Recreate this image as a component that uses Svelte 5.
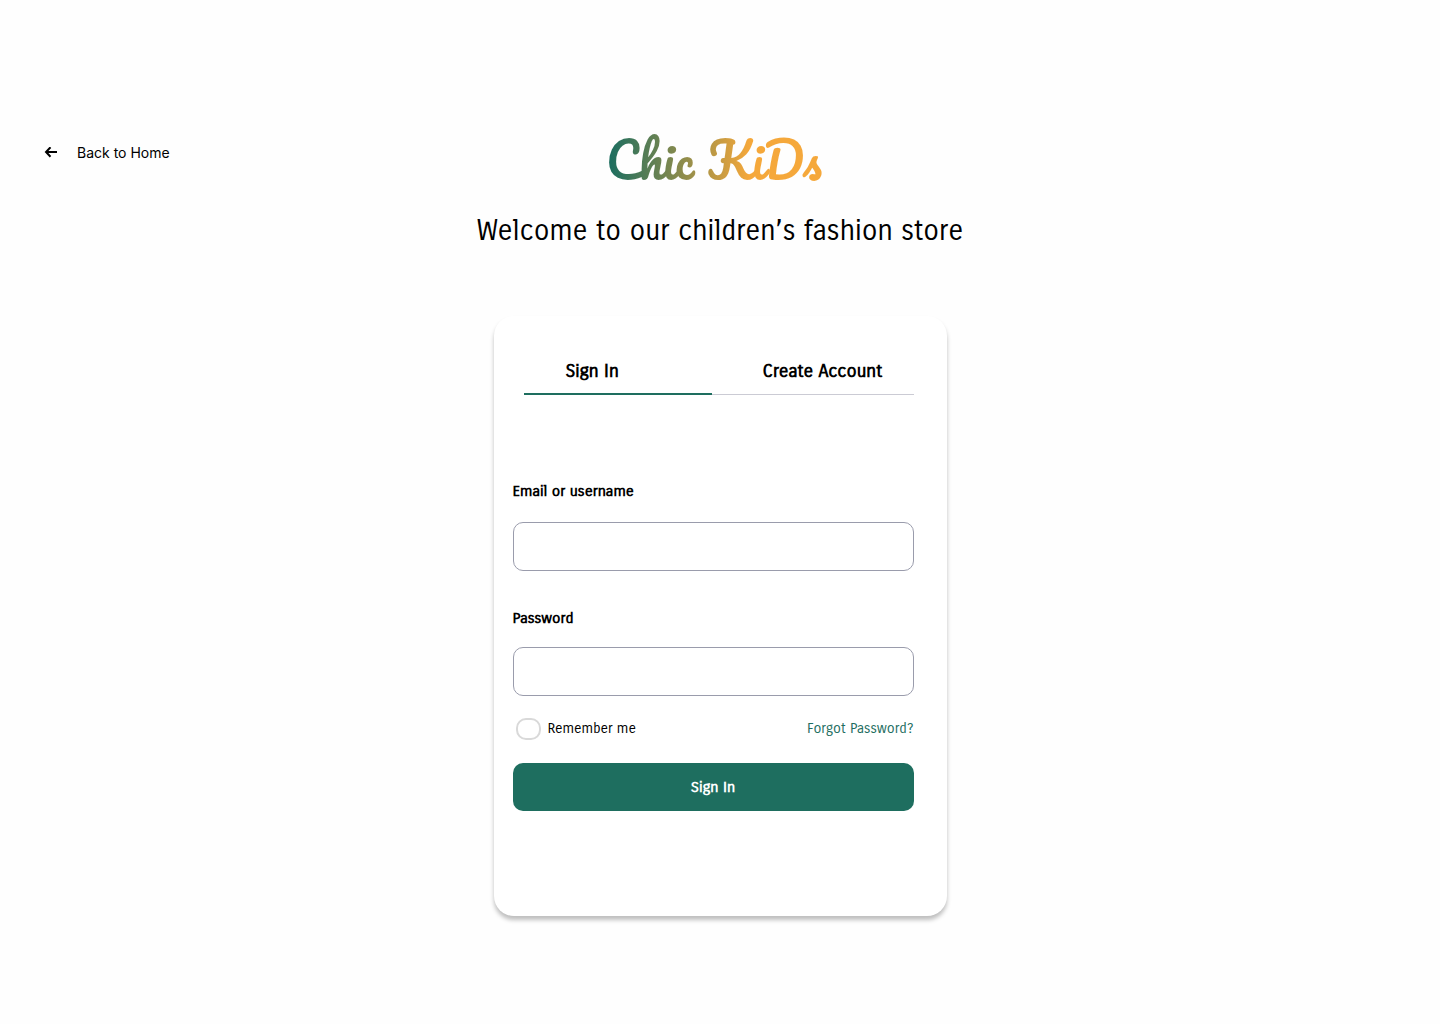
<script>
  let mode = 'signin'
  let email = ''
  let password = ''
  let remember = false

  function handleSubmit() {
    password = ''
  }
</script>

<div class="page">
  <header>
    <a class="back" href="#home">
      <svg width="14" height="12" viewBox="0 0 14 12" fill="none" stroke="#000" stroke-width="2" aria-hidden="true">
        <path d="M13 5H2.5M6.5 0.2L2 5l4.5 4.8" />
      </svg>
      <span>Back to Home</span>
    </a>
    <div class="logo">Chic KiDs</div>
  </header>

  <h1>Welcome to our children’s fashion store</h1>

  <main class="card">
    <div class="tabs" role="tablist">
      <button role="tab" class:active={mode === 'signin'} aria-selected={mode === 'signin'} on:click={() => (mode = 'signin')}>Sign In</button>
      <button role="tab" class:active={mode === 'create'} aria-selected={mode === 'create'} on:click={() => (mode = 'create')}>Create Account</button>
    </div>

    <form on:submit|preventDefault={handleSubmit}>
      <label class="field" for="email">Email or username</label>
      <input id="email" class="text" type="text" bind:value={email} />

      <label class="field" for="password">Password</label>
      <input id="password" class="text" type="password" bind:value={password} />

      <div class="options">
        <label class="remember">
          <input type="checkbox" bind:checked={remember} />
          Remember me
        </label>
        <a href="#forgot">Forgot Password?</a>
      </div>

      <button class="submit" type="submit">{mode === 'signin' ? 'Sign In' : 'Create Account'}</button>
    </form>
  </main>
</div>

<style>
  :global(*) { box-sizing: border-box; }
  :global(body) {
    margin: 0;
    background: #fefefe;
    color: #000;
    font-family: 'Carrois Gothic', Lato, sans-serif;
  }
  button, input { font-family: inherit; }

  .page { min-height: 100vh; padding: 124px 44px 108px; }

  header { display: grid; grid-template-columns: 1fr auto 1fr; }
  .back {
    display: flex; align-items: center; align-self: start; gap: 19px;
    margin-top: 18px; color: #000; text-decoration: none;
    font-family: Inter, sans-serif; font-size: 14px; line-height: 22px;
  }
  .logo {
    padding-right: 12px; font-family: Pacifico, Lato, cursive;
    font-size: 48px; line-height: 72px;
    background: linear-gradient(90deg, #1e6e5f 2%, #f5a83b 63%);
    -webkit-background-clip: text; background-clip: text; color: transparent;
  }

  h1 { margin: 15px 0 0; font-size: 28px; line-height: 40px; font-weight: 400; text-align: center; }

  .card {
    max-width: 453px; margin: 65px auto 0; padding: 32px 33px 105px 19px;
    background: #fff; border-radius: 20px; box-shadow: 0 4px 4px rgba(0, 0, 0, 0.25);
  }

  .tabs { display: flex; margin-left: 11px; }
  .tabs button {
    flex: 1; height: 47px; padding: 0 0 2px 42px; background: none; border: none;
    box-shadow: inset 0 -1px #cbcbd4; text-align: left;
    font-size: 18px; font-weight: 700; color: #000; cursor: pointer;
  }
  .tabs button + button { flex: 0 0 202px; padding-left: 51px; }
  .tabs button.active { box-shadow: inset 0 -2px #1e6e5f; }

  form { padding-top: 84px; }
  .field { display: block; font-size: 15px; line-height: 24px; font-weight: 700; }
  .text {
    display: block; width: 100%; height: 49px; margin: 19px 0 35px; padding: 0 16px;
    border: 1px solid #9a9cac; border-radius: 10px; background: #fff; font-size: 15px;
  }
  #password { margin: 17px 0 21px; }

  .options { display: flex; justify-content: space-between; align-items: center; font-size: 14px; line-height: 24px; }
  .options a { color: #1e6e5f; text-decoration: none; }
  .remember { display: flex; align-items: center; gap: 7px; padding-left: 3px; }
  .remember input {
    appearance: none; width: 25px; height: 22px; margin: 0;
    border: 2px solid #d9d9d9; border-radius: 10px; background: #fff;
  }
  .remember input:checked { background: #1e6e5f; }

  .submit {
    width: 100%; height: 48px; margin-top: 22px; border: none; border-radius: 10px;
    background: #1e6e5f; color: #fff; font-size: 15px; font-weight: 700; cursor: pointer;
  }
</style>
